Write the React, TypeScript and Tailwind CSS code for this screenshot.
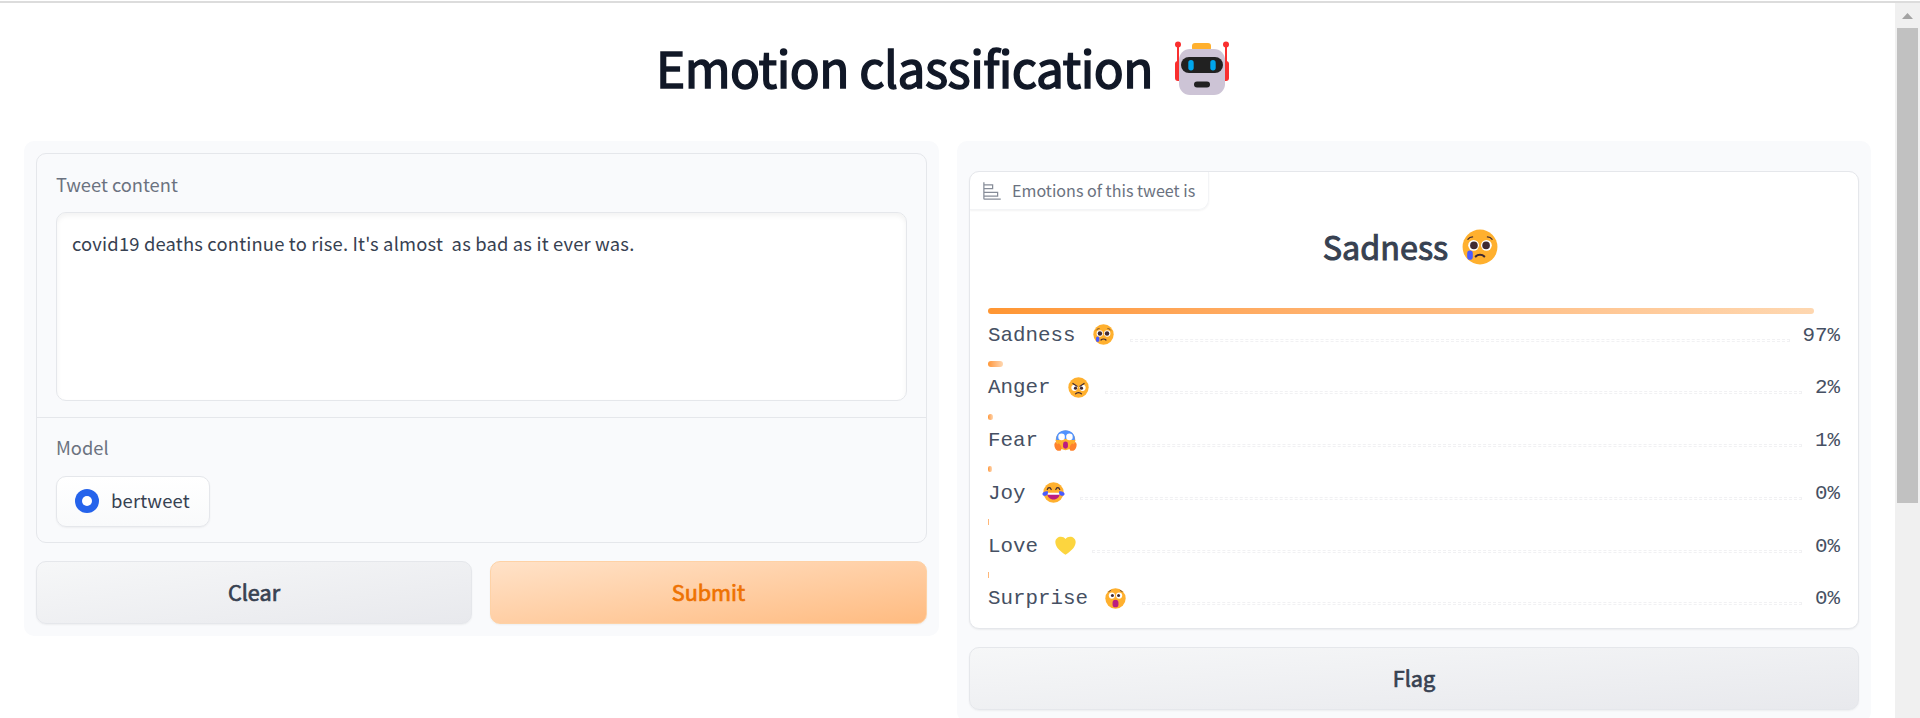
import React from "react";

const SANS = "font-['Noto_Sans_CJK_SC','Noto_Sans',sans-serif]";

type IconProps = { className?: string };

function Robot({ className }: IconProps) {
  return (
    <svg viewBox="0 0 54 54" className={className}>
      <rect x="17" y="2" width="19" height="8" rx="3" fill="#ffb02e" />
      <path d="M3 3v24M51 3v24" stroke="#f92f2f" strokeWidth="2" />
      <circle cx="3" cy="3.5" r="3" fill="#f92f2f" />
      <circle cx="51" cy="3.5" r="3" fill="#f92f2f" />
      <rect x="0" y="20" width="8" height="20" rx="3" fill="#f92f2f" />
      <rect x="46" y="20" width="8" height="20" rx="3" fill="#f92f2f" />
      <rect x="4" y="8" width="46" height="46" rx="11" fill="#cdc4d6" />
      <rect x="6" y="16" width="42" height="16" rx="8" fill="#212121" />
      <rect x="13.3" y="19" width="5.4" height="10.5" rx="2.7" fill="#00a6ed" />
      <rect x="35.3" y="19" width="5.4" height="10.5" rx="2.7" fill="#00a6ed" />
      <rect x="19" y="40.5" width="16" height="6" rx="3" fill="#212121" />
    </svg>
  );
}

function SadFace({ className }: IconProps) {
  return (
    <svg viewBox="0 0 32 32" className={className}>
      <circle cx="16" cy="16" r="15.5" fill="#ffb02e" />
      <circle cx="10.3" cy="14.5" r="4.8" fill="#fff" />
      <circle cx="21.7" cy="14.5" r="4.8" fill="#fff" />
      <circle cx="10.6" cy="14.6" r="3.4" fill="#402a32" />
      <circle cx="21.4" cy="14.6" r="3.4" fill="#402a32" />
      <path d="M5.2 9.2c1-1.4 2.4-2.2 4.2-2.2M26.8 9.2c-1-1.4-2.4-2.2-4.2-2.2" stroke="#402a32" strokeWidth="1.1" strokeLinecap="round" fill="none" />
      <path d="M12.2 24.4c1.8-2 5.8-2 7.6 0" stroke="#402a32" strokeWidth="1.8" strokeLinecap="round" fill="none" />
      <rect x="4.6" y="19.2" width="5" height="8.2" rx="2.5" fill="#4a5bff" />
    </svg>
  );
}

function AngryFace({ className }: IconProps) {
  return (
    <svg viewBox="0 0 32 32" className={className}>
      <circle cx="16" cy="16" r="15.5" fill="#ffb02e" />
      <circle cx="9.8" cy="16.5" r="4.7" fill="#fff" />
      <circle cx="22.2" cy="16.5" r="4.7" fill="#fff" />
      <circle cx="11.4" cy="17" r="2.4" fill="#402a32" />
      <circle cx="20.6" cy="17" r="2.4" fill="#402a32" />
      <path d="M7.5 9.8l6.2 4.4M24.5 9.8l-6.2 4.4" stroke="#402a32" strokeWidth="1.7" strokeLinecap="round" />
      <path d="M11.5 25.6c2-2.6 7-2.6 9 0" stroke="#402a32" strokeWidth="1.9" strokeLinecap="round" fill="none" />
    </svg>
  );
}

function FearFace({ className }: IconProps) {
  return (
    <svg viewBox="0 0 34 32" className={className}>
      <circle cx="17" cy="15.8" r="15" fill="#ffb02e" />
      <path d="M2.5 15C2.5 6 9 .5 17 .5S31.500 6 31.500 15c-5 1-24 1-29 0z" fill="#5092ff" />
      <path d="M6 16c5-3 17-3 22 0l-2 4H8z" fill="#ffb02e" />
      <circle cx="11" cy="10.500" r="5" fill="#fff" />
      <circle cx="23" cy="10.500" r="5" fill="#fff" />
      <rect x="13.300" y="17.500" width="7.400" height="11" rx="3.700" fill="#bb1d80" />
      <path d="M1 19c2-1 2.500 1 3.500 3 1-2 3-2 4 0 2.500 3 3.500 7 1 9.500H5C1.500 30 0 26 0 22z" fill="#ff822d" />
      <path d="M33 19c-2-1-2.500 1-3.500 3-1-2-3-2-4 0-2.500 3-3.500 7-1 9.500H29c3.500-1.500 5-5.500 5-9.500z" fill="#ff822d" />
    </svg>
  );
}

function JoyFace({ className }: IconProps) {
  return (
    <svg viewBox="0 0 34 32" className={className}>
      <circle cx="17" cy="16" r="15.5" fill="#ffb02e" />
      <path d="M7.500 11.500c1-4 5-4 6 0M20.500 11.500c1-4 5-4 6 0" stroke="#402a32" strokeWidth="1.8" strokeLinecap="round" fill="none" />
      <path d="M7.500 17h19c0 6-4 9.500-9.500 9.500S7.500 23 7.500 17z" fill="#bb1d80" />
      <path d="M7.500 16.500h19v1.800c0 .8-.5 1.200-1.300 1.200H8.800c-.8 0-1.300-.4-1.300-1.200z" fill="#fff" />
      <path d="M8.500 14c.7 4-1.500 7-5 7-3 0-4.300-2.800-2.500-4.700C2.500 14.500 5.500 14 8.500 14zM25.500 14c-.7 4 1.500 7 5 7 3 0 4.300-2.800 2.500-4.700-1.500-1.800-4.500-2.300-7.500-2.300z" fill="#4a5bff" />
    </svg>
  );
}

function Heart({ className }: IconProps) {
  return (
    <svg viewBox="0 0 32 32" className={className}>
      <path d="M16 30C10 26.500.5 19.500.5 10.800.5 2.500 11.500-.3 16 6.200 20.500-.3 31.500 2.500 31.500 10.800 31.500 19.500 22 26.500 16 30z" fill="#fcd53f" />
    </svg>
  );
}

function SurpriseFace({ className }: IconProps) {
  return (
    <svg viewBox="0 0 32 32" className={className}>
      <circle cx="16" cy="16" r="15.5" fill="#ffb02e" />
      <circle cx="10.500" cy="11.500" r="4.700" fill="#fff" />
      <circle cx="21.500" cy="11.500" r="4.700" fill="#fff" />
      <circle cx="11.300" cy="11.500" r="2.300" fill="#402a32" />
      <circle cx="20.700" cy="11.500" r="2.300" fill="#402a32" />
      <path d="M5.800 5.500l3-1.700M26.200 5.500l-3-1.700" stroke="#402a32" strokeWidth="1.100" strokeLinecap="round" />
      <rect x="11.500" y="18" width="9" height="11.500" rx="4.500" fill="#bb1d80" />
    </svg>
  );
}

function LabelIcon() {
  return (
    <svg viewBox="0 0 32 32" className="h-5 w-5 text-[#868c98]" fill="currentColor">
      <path d="M4 2H2v26a2 2 0 0 0 2 2h26v-2H4v-3h22v-8H4v-4h14V5H4zm20 17v4H4v-4zM16 7v4H4V7z" />
    </svg>
  );
}

type Row = { name: string; value: string; bar: string; Icon: React.FC<IconProps>; icon: string };

const rows: Row[] = [
  { name: "Sadness", value: "97%", bar: "w-[826px] rounded-[3px]", Icon: SadFace, icon: "ml-[17px] w-[21px]" },
  { name: "Anger", value: "2%", bar: "w-[15px] rounded-[3px]", Icon: AngryFace, icon: "ml-[17px] w-[21px]" },
  { name: "Fear", value: "1%", bar: "w-[5px] rounded-[3px]", Icon: FearFace, icon: "ml-[16px] mr-[-1px] w-[23px]" },
  { name: "Joy", value: "0%", bar: "w-1 rounded-[3px]", Icon: JoyFace, icon: "ml-[16px] mr-[-1px] w-[23px]" },
  { name: "Love", value: "0%", bar: "w-px", Icon: Heart, icon: "ml-[17px] w-[21px]" },
  { name: "Surprise", value: "0%", bar: "w-px", Icon: SurpriseFace, icon: "ml-[17px] w-[21px]" },
];

function Scrollbar() {
  return (
    <div className="flex w-[25px] shrink-0 flex-col items-center bg-[#f0f0f0]">
      <div className="flex h-[25px] items-center pt-[1px]">
        <svg viewBox="0 0 11 6" className="h-[6px] w-[11px]">
          <path d="M5.500 0L11 6H0z" fill="#a3a3a3" />
        </svg>
      </div>
      <div className="h-[475px] w-[21px] bg-[#c1c1c1]" />
    </div>
  );
}

const grayButton =
  "h-[63px] rounded-[10px] border border-[#e5e7eb] bg-linear-to-br from-[#f6f7f8] to-[#e8e9ed] pb-[3px] text-[21.6px] leading-[57px] text-[#374151] [-webkit-text-stroke:0.7px_#374151] shadow-[0_1px_2px_rgba(0,0,0,0.05)]";

export default function App() {
  return (
    <div className={`flex h-[718px] w-[1920px] flex-col overflow-hidden bg-white pt-px ${SANS}`}>
      <div className="h-[2px] shrink-0 bg-[#dcdcdc]" />
      <div className="flex min-h-0 flex-1">
        <main className="min-w-0 flex-1 pl-6 pr-6">
          <h1 className="flex h-[138px] items-start justify-center pr-[10px] pt-[36px] text-[49.5px] font-normal leading-[56px] tracking-[-0.54px] text-[#111827] [-webkit-text-stroke:1.5px_#111827]">
            <span className="whitespace-nowrap">Emotion classification</span>
            <Robot className="ml-[22px] mt-[2px] h-[54px] w-[54px]" />
          </h1>
          <div className="flex items-start gap-[18px]">
            <section className="h-[495px] w-[915px] rounded-[10px] bg-[#f9fafc] p-3">
              <div className="h-[390px] rounded-[10px] border border-[#e5e7eb]">
                <div className="h-[264px] border-b border-[#e5e7eb] px-[19px] pt-[19px]">
                  <div className="h-[39px] text-[18.3px] leading-[23px] text-[#6b7280]">Tweet content</div>
                  <div className="h-[189px] whitespace-pre rounded-[10px] border border-[#e5e7eb] bg-white px-[15px] pt-[18px] text-[18.4px] leading-[24px] tracking-[0.17px] text-[#374151] shadow-[inset_0_3px_5px_rgba(0,0,0,0.05)]">
                    {"covid19 deaths continue to rise. It's almost  as bad as it ever was."}
                  </div>
                </div>
                <div className="px-[19px] pt-[17px]">
                  <div className="h-[41px] text-[18.3px] leading-[24px] text-[#6b7280]">Model</div>
                  <div className="flex h-[51px] w-[154px] items-center rounded-[10px] border border-[#e5e7eb] bg-linear-to-b from-white to-[#f9fafb] pl-[18px] shadow-[0_1px_2px_rgba(0,0,0,0.05)]">
                    <span className="mb-[2px] flex h-6 w-6 items-center justify-center rounded-full bg-[#2563eb]">
                      <span className="h-[10px] w-[10px] rounded-full bg-white" />
                    </span>
                    <span className="mb-[4px] ml-3 text-[18.4px] leading-[24px] tracking-[0.17px] text-[#374151]">bertweet</span>
                  </div>
                </div>
              </div>
              <div className="mt-[18px] flex gap-[18px]">
                <button className={`w-[436px] ${grayButton}`}>Clear</button>
                <button className="h-[63px] flex-1 rounded-[10px] border border-[#fed2a6] bg-linear-to-br from-[#ffe2c8] to-[#ffbb80] pb-[3px] text-[21.6px] leading-[57px] text-[#ee7202] [-webkit-text-stroke:0.7px_#ee7202] shadow-[0_1px_2px_rgba(0,0,0,0.05)]">
                  Submit
                </button>
              </div>
            </section>
            <section className="h-[581px] w-[914px] rounded-[10px] bg-[#f9fafc] px-3 pt-[30px]">
              <div className="h-[458px] overflow-hidden rounded-[10px] border border-[#e5e7eb] bg-white shadow-[0_1px_2px_rgba(0,0,0,0.06)]">
                <div className="flex h-[38px] w-[239px] items-center rounded-br-[10px] border-b border-r border-[#f3f4f6] pl-[12px] shadow-[0_1px_2px_rgba(0,0,0,0.05)]">
                  <LabelIcon />
                  <span className="mb-[2px] ml-[10px] whitespace-nowrap text-[16.1px] leading-[24px] text-[#6b7280]">Emotions of this tweet is</span>
                </div>
                <div className="flex h-[98px] items-start justify-center pr-[7px] pt-[16px] text-[32.3px] font-normal leading-[40px] text-[#374151] [-webkit-text-stroke:1px_#374151]">
                  <span>Sadness</span>
                  <SadFace className="ml-[14px] mt-[3px] h-9 w-9" />
                </div>
                <div className="pl-[18px] pr-[18px]">
                  {rows.map(({ name, value, bar, Icon, icon }) => (
                    <div key={name} className="h-[52.8px]">
                      <div className={`h-[6px] bg-linear-to-r from-[#ff9632] to-[#fed7b0] ${bar}`} />
                      <div className="flex h-[41px] items-center font-['Liberation_Mono',monospace] text-[20.83px] leading-[40px] text-[#465063]">
                        <span className="pt-[2px]">{name}</span>
                        <Icon className={`h-[21px] shrink-0 ${icon}`} />
                        <span className="ml-4 mr-[13px] mt-[11px] h-[3px] flex-1 border border-dashed border-[#f1f1f3]" />
                        <span className="pt-[2px]">{value}</span>
                      </div>
                    </div>
                  ))}
                </div>
              </div>
              <button className={`mt-[18px] w-full ${grayButton}`}>Flag</button>
            </section>
          </div>
        </main>
        <Scrollbar />
      </div>
    </div>
  );
}
